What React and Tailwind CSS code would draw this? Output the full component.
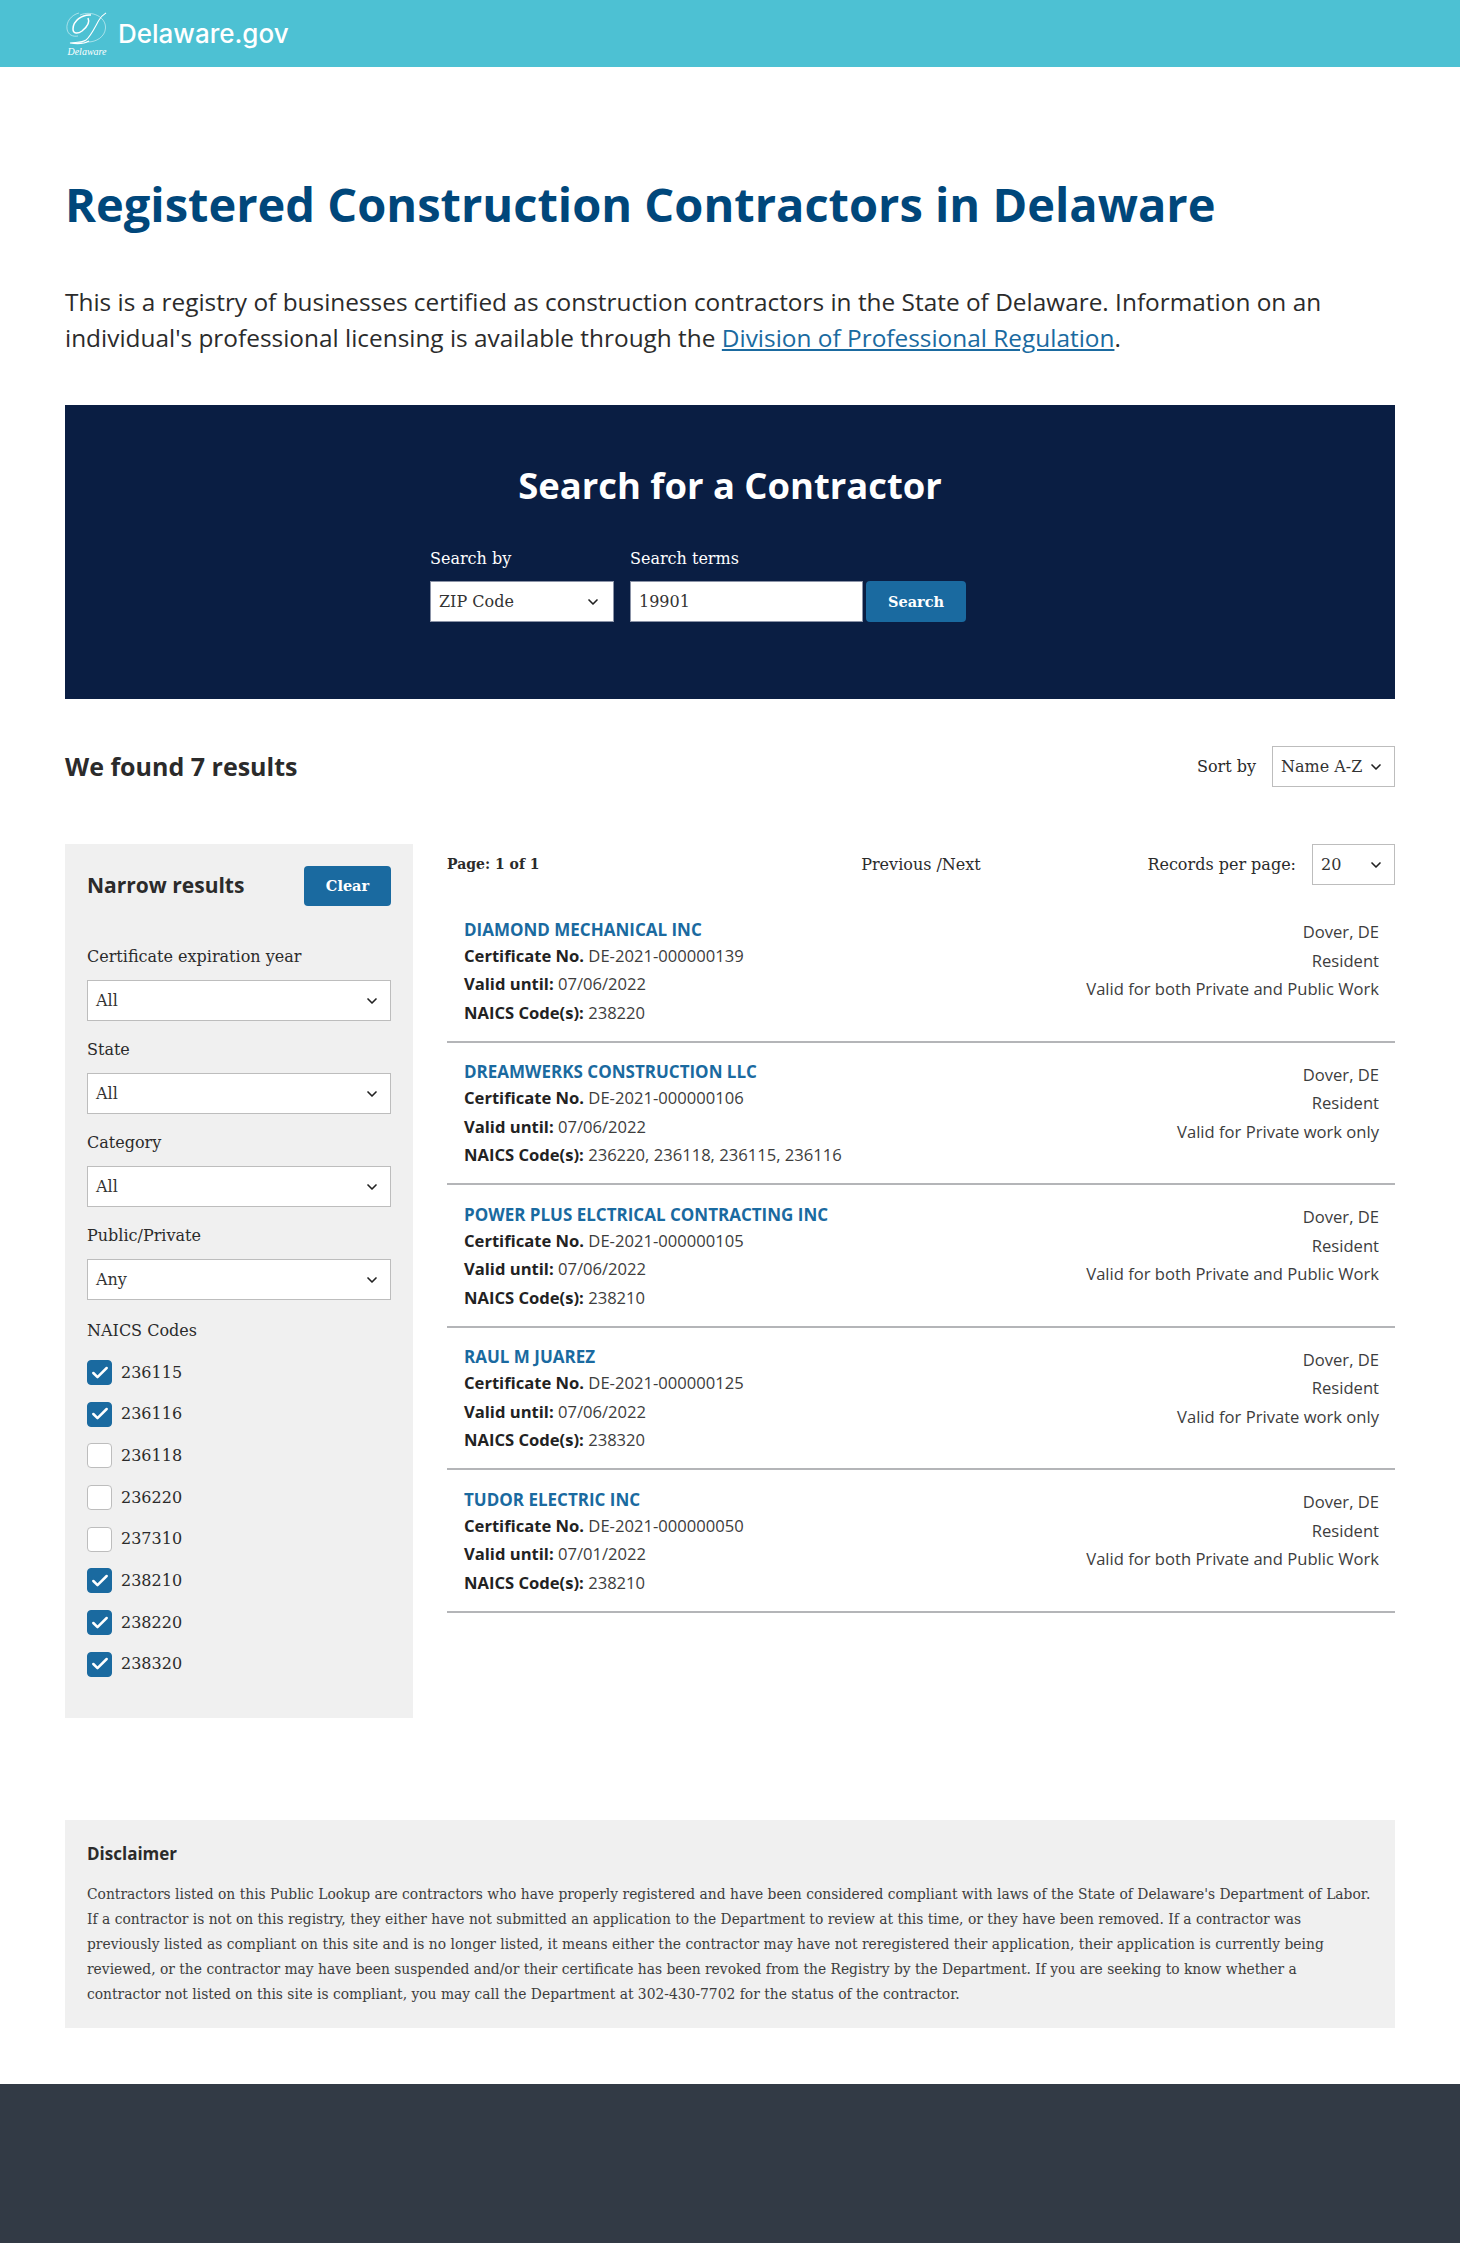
import { ChevronDown, Check } from "lucide-react";

const results = [
  { name: "DIAMOND MECHANICAL INC", cert: "DE-2021-000000139", valid: "07/06/2022", naics: "238220", work: "Valid for both Private and Public Work" },
  { name: "DREAMWERKS CONSTRUCTION LLC", cert: "DE-2021-000000106", valid: "07/06/2022", naics: "236220, 236118, 236115, 236116", work: "Valid for Private work only" },
  { name: "POWER PLUS ELCTRICAL CONTRACTING INC", cert: "DE-2021-000000105", valid: "07/06/2022", naics: "238210", work: "Valid for both Private and Public Work" },
  { name: "RAUL M JUAREZ", cert: "DE-2021-000000125", valid: "07/06/2022", naics: "238320", work: "Valid for Private work only" },
  { name: "TUDOR ELECTRIC INC", cert: "DE-2021-000000050", valid: "07/01/2022", naics: "238210", work: "Valid for both Private and Public Work" },
];

const filters = [
  { label: "Certificate expiration year", value: "All" },
  { label: "State", value: "All" },
  { label: "Category", value: "All" },
  { label: "Public/Private", value: "Any" },
];

const codes = [
  { code: "236115", on: true },
  { code: "236116", on: true },
  { code: "236118", on: false },
  { code: "236220", on: false },
  { code: "237310", on: false },
  { code: "238210", on: true },
  { code: "238220", on: true },
  { code: "238320", on: true },
];

function Logo() {
  return (
    <div className="flex flex-col items-center w-[42px] text-white">
      <svg width="42" height="35" viewBox="0 0 42 35" fill="none" stroke="white" className="block">
        {/* outer thin ring and the script D */}
        <path d="M14 4 C26 -1 40 6 39.5 17 C39 26 30 31 22 31" strokeWidth="0.6" opacity="0.85" />
        <path d="M13 2 C5 4 0 11 1 18 C2 24 7 26 12 25" strokeWidth="0.6" opacity="0.85" />
        <path d="M40 2 C37 4 35 5 33 9 C29 16 25 25 20 29 C16 32 9 31 4 32 C11 33 18 33 23 30" strokeWidth="1.1" />
        <path d="M25 4 C16 3 7 10 7 18 C7 23 12 23 16 20 C21 16 24 11 22 7" strokeWidth="1.5" />
      </svg>
      <span className="font-['Liberation_Serif',serif] italic text-[10px] leading-[11px] whitespace-nowrap">Delaware</span>
    </div>
  );
}

function SelectBox({ value, className, dark }) {
  return (
    <div className={`flex items-center justify-between bg-white border ${dark ? "border-[#8b93a7]" : "border-[#bdbdbd]"} ${className}`}>
      <span className="whitespace-nowrap">{value}</span>
      <ChevronDown className="size-4 shrink-0 text-[#222]" strokeWidth={2.5} />
    </div>
  );
}

function ResultRow({ item }) {
  return (
    <div className="flex justify-between h-[142.5px] pl-[17px] pr-4 border-b-2 border-[#b4b5b8] font-['Open_Sans',sans-serif] text-[16.6px] leading-[28.5px] text-[#3d3d3d]">
      <div className="pt-[16.5px]">
        <div className="text-[17px] font-bold text-[#1a6aa0] leading-[25px]">{item.name}</div>
        <div><b className="font-bold text-[#222]">Certificate No.</b> {item.cert}</div>
        <div><b className="font-bold text-[#222]">Valid until:</b> {item.valid}</div>
        <div><b className="font-bold text-[#222]">NAICS Code(s):</b> {item.naics}</div>
      </div>
      <div className="pt-[18px] text-right">
        <div>Dover, DE</div>
        <div>Resident</div>
        <div>{item.work}</div>
      </div>
    </div>
  );
}

export default function App() {
  return (
    <div className="min-h-[2243px] bg-white font-['DejaVu_Serif',serif] text-[#2b2b2b]">
      <header className="h-[67px] bg-[#4dc1d3] pl-[66px] flex items-center gap-[10px]">
        <Logo />
        <span className="font-['Inter',sans-serif] font-medium text-[26px] text-white leading-none">Delaware.gov</span>
      </header>

      <main className="px-[65px]">
        <h1 className="mt-[106px] font-['Open_Sans',sans-serif] font-bold text-[47px] leading-[62px] text-[#00477b]">
          Registered Construction Contractors in Delaware
        </h1>
        <p className="mt-[49px] font-['Open_Sans',sans-serif] text-[24.4px] leading-[36px] text-[#2b2b2b]">
          This is a registry of businesses certified as construction contractors in the State of Delaware. Information on an individual's professional licensing is available through the{" "}
          <a className="text-[#1a6aa0] underline">Division of Professional Regulation</a>.
        </p>

        <section className="mt-[49px] h-[294px] bg-[#0a1e43] flex flex-col items-center pt-[55px]">
          <h2 className="font-['Open_Sans',sans-serif] font-bold text-[36.4px] leading-[50px] text-white">Search for a Contractor</h2>
          <div className="mt-[37px] self-start ml-[365px] flex items-end text-[16px]">
            <div className="w-[184px] mr-4">
              <div className="text-white leading-[24px] mb-[10px]">Search by</div>
              <SelectBox dark value="ZIP Code" className="h-[41px] pl-2 pr-3 text-[#333]" />
            </div>
            <div className="w-[233px] mr-[3px]">
              <div className="text-white leading-[24px] mb-[10px]">Search terms</div>
              <div className="h-[41px] px-2 flex items-center bg-white border border-[#8b93a7] text-[#333]">19901</div>
            </div>
            <button className="w-[100px] h-[41px] rounded bg-[#1a6aa0] text-white font-bold text-[14.5px]">Search</button>
          </div>
        </section>

        <div className="mt-[47px] h-[41px] flex items-center justify-between">
          <h3 className="font-['Open_Sans',sans-serif] font-bold text-[25px] text-[#2b2b2b]">We found 7 results</h3>
          <div className="flex items-center gap-4 text-[16px]">
            <span>Sort by</span>
            <SelectBox value="Name A-Z" className="w-[123px] h-[41px] pl-2 pr-[10px] text-[#333]" />
          </div>
        </div>

        <div className="mt-[57px] flex items-start gap-[34px]">
          <aside className="w-[348px] h-[874px] shrink-0 bg-[#f0f0f0] px-[22px] pt-[22px]">
            <div className="flex items-center justify-between">
              <span className="font-['Open_Sans',sans-serif] font-bold text-[21px] text-[#2b2b2b]">Narrow results</span>
              <button className="w-[87px] h-[40px] rounded bg-[#1a6aa0] text-white font-bold text-[14.5px]">Clear</button>
            </div>
            <div className="mt-[39px] flex flex-col gap-[17px]">
              {filters.map((f) => (
                <div key={f.label} className="text-[16px]">
                  <div className="leading-[24px] mb-[11px]">{f.label}</div>
                  <SelectBox value={f.value} className="h-[41px] pl-2 pr-[10px] text-[#333]" />
                </div>
              ))}
            </div>
            <div className="mt-[19px] text-[16px] leading-[24px]">NAICS Codes</div>
            <ul className="mt-[17px] flex flex-col gap-[16.7px]">
              {codes.map((c) => (
                <li key={c.code} className="flex items-center gap-[9px] h-[25px] text-[16px]">
                  <span className={`size-[25px] rounded flex items-center justify-center border ${c.on ? "bg-[#1a6aa0] border-[#1a6aa0]" : "bg-white border-[#bdbdbd]"}`}>
                    {c.on && <Check className="size-5 text-white" strokeWidth={3} />}
                  </span>
                  {c.code}
                </li>
              ))}
            </ul>
          </aside>

          <div className="flex-1">
            <div className="h-[41px] grid grid-cols-3 items-center text-[16px]">
              <span className="font-bold text-[14px]">Page: 1 of 1</span>
              <span className="text-center">Previous /Next</span>
              <div className="flex items-center justify-end gap-4">
                <span className="whitespace-nowrap">Records per page:</span>
                <SelectBox value="20" className="w-[83px] h-[41px] pl-2 pr-[10px] text-[#333]" />
              </div>
            </div>
            <div className="mt-[15px]">
              {results.map((r) => (
                <ResultRow key={r.name} item={r} />
              ))}
            </div>
          </div>
        </div>

        <section className="mt-[102px] h-[208px] bg-[#f0f0f0] px-[22px] pt-[21px]">
          <h4 className="font-['Open_Sans',sans-serif] font-bold text-[17px] leading-[26px] text-[#2b2b2b]">Disclaimer</h4>
          <p className="mt-[15px] text-[13.85px] leading-[25px] text-[#3d3d3d]">
            Contractors listed on this Public Lookup are contractors who have properly registered and have been considered compliant with laws of the State of Delaware's Department of Labor. If a contractor is not on this registry, they either have not submitted an application to the Department to review at this time, or they have been removed. If a contractor was previously listed as compliant on this site and is no longer listed, it means either the contractor may have not reregistered their application, their application is currently being reviewed, or the contractor may have been suspended and/or their certificate has been revoked from the Registry by the Department. If you are seeking to know whether a contractor not listed on this site is compliant, you may call the Department at 302-430-7702 for the status of the contractor.
          </p>
        </section>
      </main>

      <footer className="mt-[56px] h-[160px] bg-[#323a45]" />
    </div>
  );
}
